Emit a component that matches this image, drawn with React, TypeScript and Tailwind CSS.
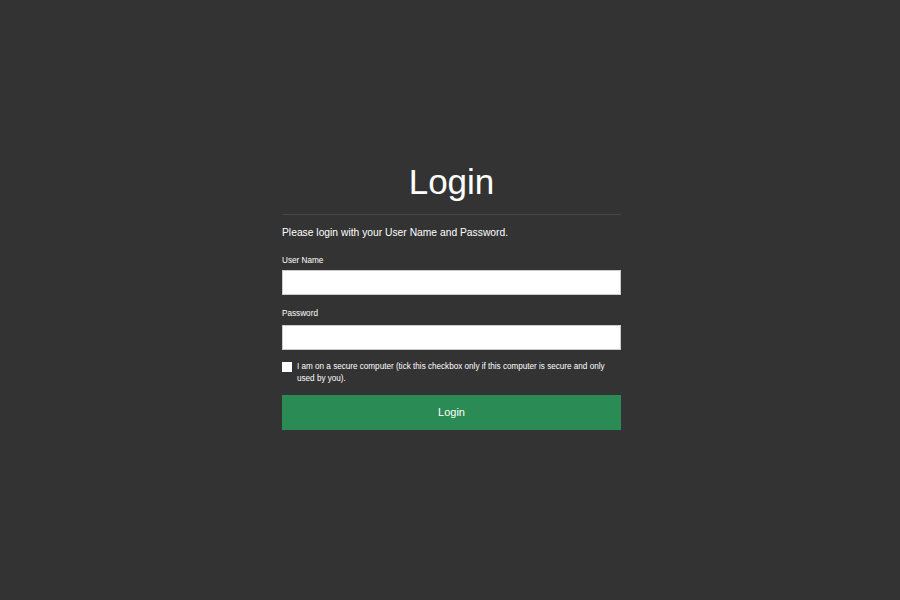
export default function App() {
  return (
    <div
      className="min-h-[600px] w-full bg-[#333333] flex justify-center pl-[3px] text-white"
      style={{ fontFamily: '"Liberation Sans", Arial, Helvetica, sans-serif' }}
    >
      <div className="w-[339px] pt-[162px]">
        <h1 className="text-center text-[35px] leading-[40px] font-normal">Login</h1>
        <div className="mt-[12px] h-px bg-[#474747]" />
        <p className="mt-[11px] text-[10.3px] leading-[14px]">
          Please login with your User Name and Password.
        </p>
        <label className="block mt-[15px] text-[8.2px] leading-[12px]">User Name</label>
        <input type="text" className="mt-[3px] block w-full h-[25px] bg-white border border-[#cccccc] text-black outline-none" />
        <label className="block mt-[13px] text-[8.2px] leading-[12px]">Password</label>
        <input type="password" className="mt-[5px] block w-full h-[25px] bg-white border border-[#cccccc] text-black outline-none" />
        <div className="mt-[11px] flex items-start gap-[5px]">
          <span className="mt-[1px] w-[10px] h-[10px] shrink-0 bg-white" />
          <span className="text-[8.15px] leading-[12px]">
            I am on a secure computer (tick this checkbox only if this computer is secure and only used by you).
          </span>
        </div>
        <button className="mt-[10px] w-full h-[35px] bg-[#2a8b55] text-[11px] text-white">Login</button>
      </div>
    </div>
  );
}
